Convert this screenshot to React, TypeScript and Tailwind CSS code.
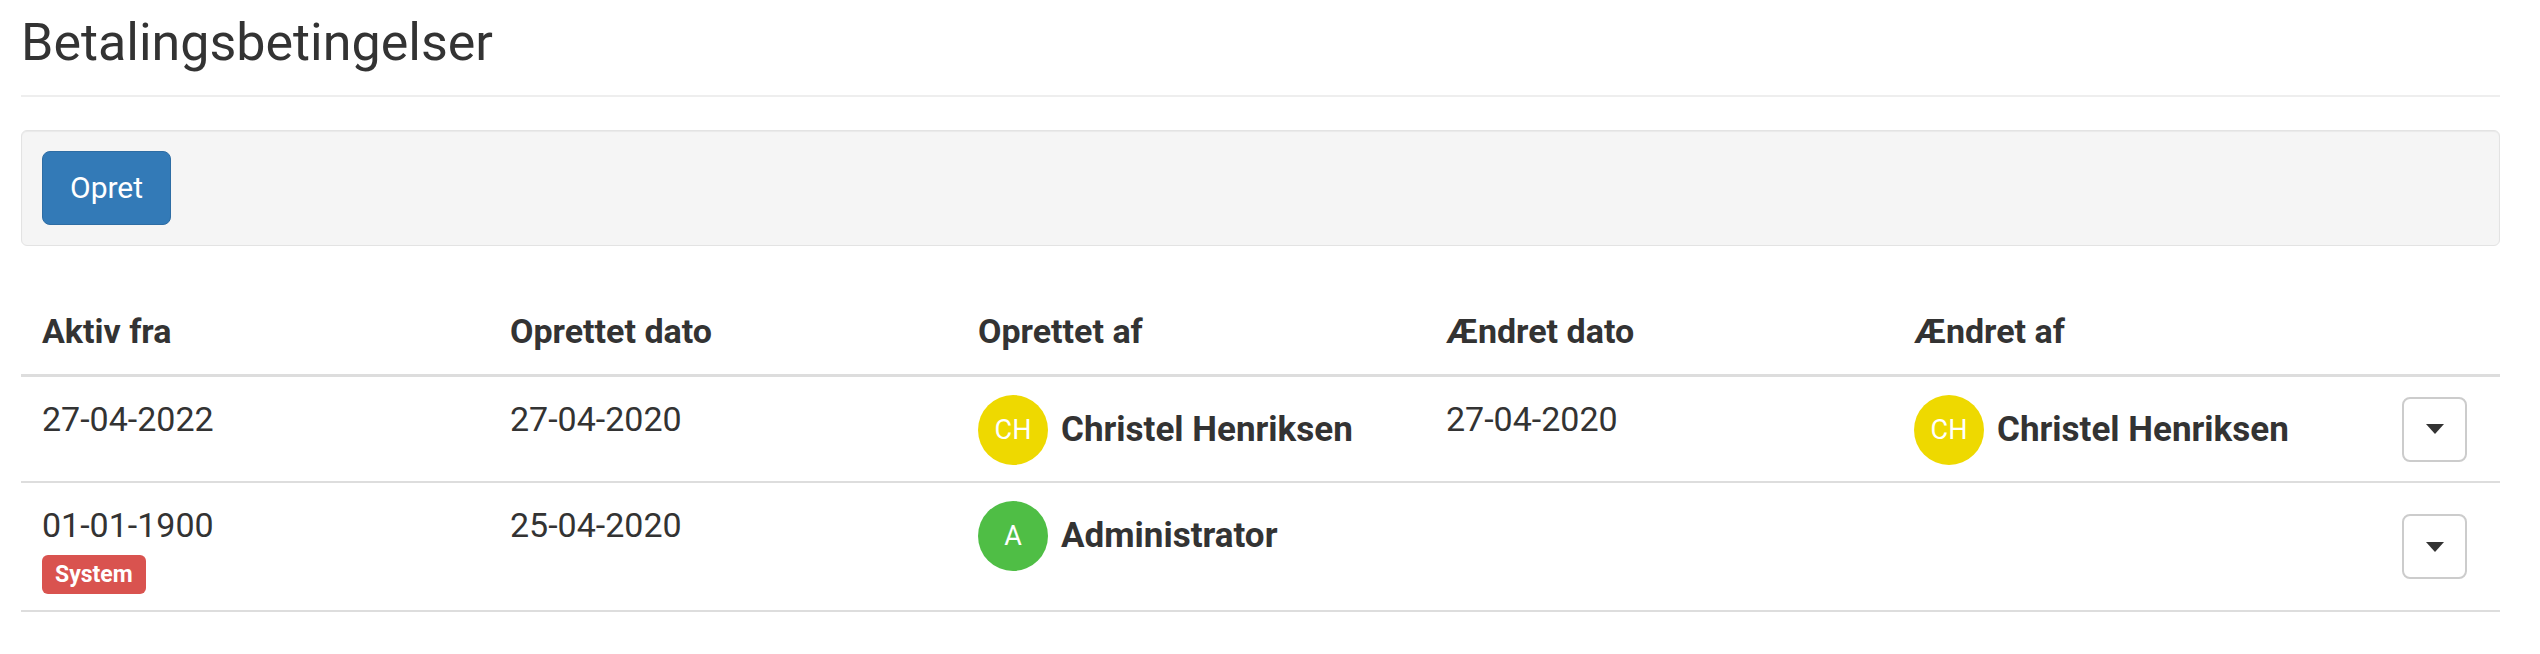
import React from 'react';

type Person = { initials: string; name: string; color: string };

type Row = {
  activeFrom: string;
  system?: boolean;
  created: string;
  createdBy: Person;
  changed?: string;
  changedBy?: Person;
};

const christel: Person = { initials: 'CH', name: 'Christel Henriksen', color: 'bg-[#eed900]' };
const admin: Person = { initials: 'A', name: 'Administrator', color: 'bg-[#4fbe45]' };

const rows: Row[] = [
  { activeFrom: '27-04-2022', created: '27-04-2020', createdBy: christel, changed: '27-04-2020', changedBy: christel },
  { activeFrom: '01-01-1900', system: true, created: '25-04-2020', createdBy: admin },
];

const UserChip = ({ person }: { person: Person }) => (
  <div className="flex items-center gap-[13px]">
    <div className={`w-[70px] h-[70px] rounded-full flex items-center justify-center text-white text-[27px] font-normal ${person.color}`}>
      {person.initials}
    </div>
    <span className="text-[35px] font-bold text-[#333]">{person.name}</span>
  </div>
);

const Caret = () => (
  <span className="inline-block w-0 h-0 border-x-[9px] border-x-transparent border-t-[10px] border-t-[#333]" />
);

export default function App() {
  const cell = 'px-[21px] pt-[18px] pb-[16px] align-top text-[34px] leading-[48px]';
  const head = 'w-[468px] px-[21px] py-[19px] text-left text-[34px] leading-[48px] font-bold align-bottom';

  return (
    <div className="min-h-screen bg-white pl-[21px] pr-[40px] font-['Roboto','Liberation_Sans',sans-serif] text-[#333]">
      <h1 className="pt-[12px] pb-[22px] border-b-2 border-[#eee] text-[52px] leading-[61px] font-normal">
        Betalingsbetingelser
      </h1>

      {/* Toolbar */}
      <div className="mt-[33px] p-[20px] bg-[#f5f5f5] border border-[#e3e3e3] rounded-[6px] shadow-[inset_0_1px_1px_rgba(0,0,0,0.05)]">
        <button className="h-[74px] px-[27px] bg-[#337ab7] border border-[#2e6da4] rounded-[8px] text-white text-[30px] leading-[72px]">
          Opret
        </button>
      </div>

      <table className="mt-[42px] w-full table-fixed border-collapse">
        <thead>
          <tr className="border-b-[3px] border-[#ddd]">
            <th className={head}>Aktiv fra</th>
            <th className={head}>Oprettet dato</th>
            <th className={head}>Oprettet af</th>
            <th className={head}>Ændret dato</th>
            <th className={head}>Ændret af</th>
            <th className="py-[19px]" />
          </tr>
        </thead>
        <tbody>
          {rows.map((r, i) => (
            <tr key={i} className="border-b-2 border-[#ddd]">
              <td className={cell}>
                <div>{r.activeFrom}</div>
                {r.system && (
                  <div className="mt-[6px] flex">
                    <span className="bg-[#d9534f] text-white text-[23px] leading-[23px] font-bold px-[13px] py-[8px] rounded-[6px]">
                      System
                    </span>
                  </div>
                )}
              </td>
              <td className={cell}>{r.created}</td>
              <td className={cell}>
                <UserChip person={r.createdBy} />
              </td>
              <td className={cell}>{r.changed}</td>
              <td className={cell}>{r.changedBy && <UserChip person={r.changedBy} />}</td>
              <td className="pr-[33px] text-right align-middle">
                <button className="inline-flex items-center justify-center w-[65px] h-[65px] bg-white border-2 border-[#ccc] rounded-[8px]">
                  <Caret />
                </button>
              </td>
            </tr>
          ))}
        </tbody>
      </table>
    </div>
  );
}
